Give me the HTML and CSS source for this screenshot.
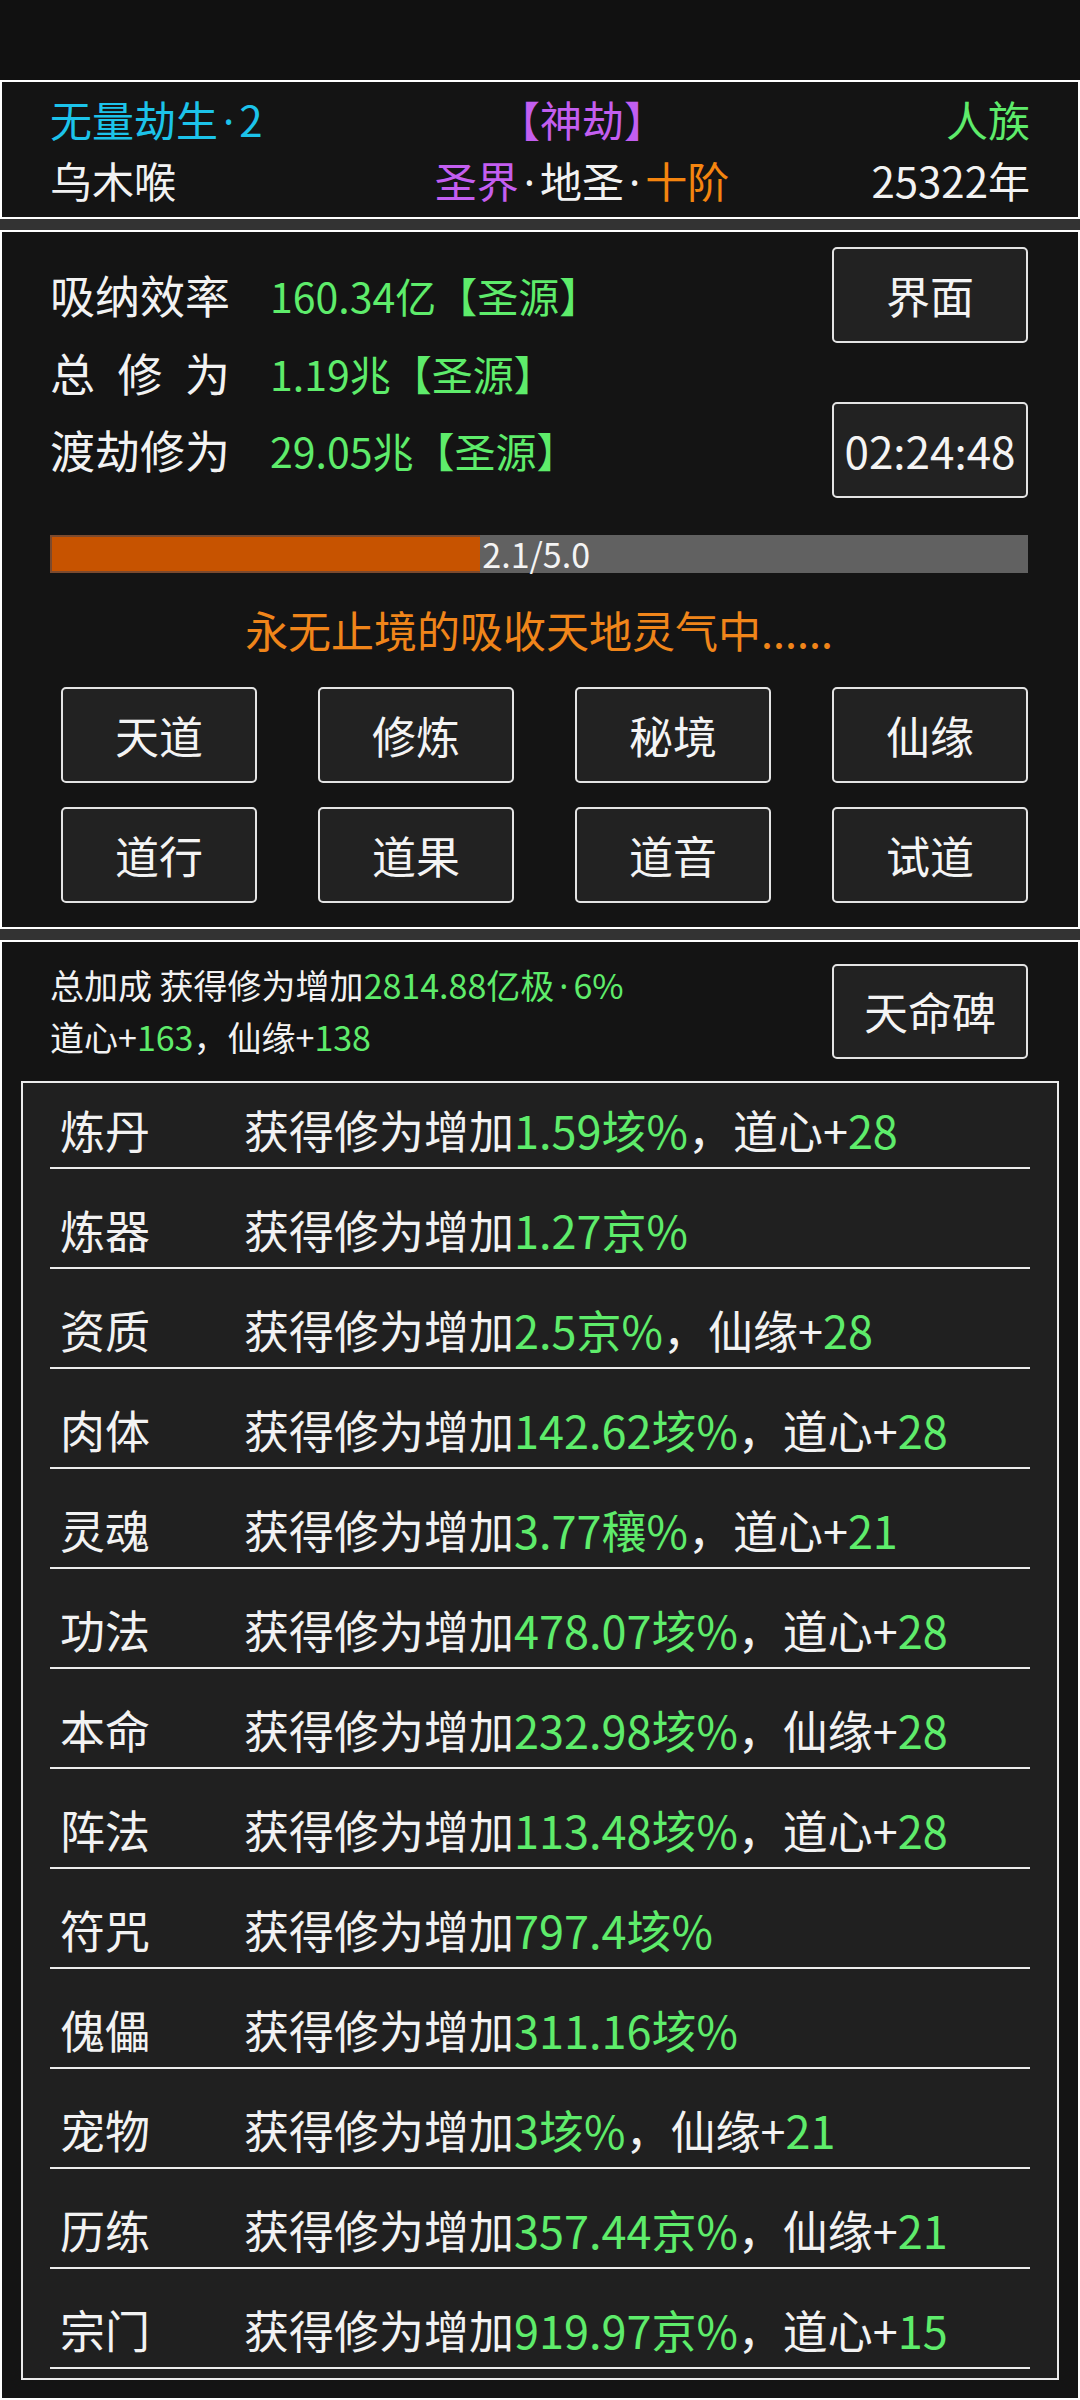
FILE: index.html
```html
<!DOCTYPE html>
<html lang="zh-CN">
<head>
<meta charset="utf-8">
<title>修仙</title>
<link rel="stylesheet" href="styles.css">
</head>
<body>
<div class="statusbar"></div>

<section class="panel header">
  <div class="hrow">
    <span class="cyan">无量劫生<span class="dot">·</span>2</span>
    <span class="mid purple">【神劫】</span>
    <span class="right green">人族</span>
  </div>
  <div class="hrow">
    <span>乌木喉</span>
    <span class="mid"><span class="purple">圣界</span><span class="dot">·</span>地圣<span class="dot">·</span><span class="orange">十阶</span></span>
    <span class="right">25322年</span>
  </div>
</section>

<div class="band"></div>

<section class="panel main">
  <div class="stats">
    <div class="label">吸纳效率</div>
    <div class="value">160.34亿【圣源】</div>
    <button class="btn side-btn">界面</button>
    <div class="label">总 修 为</div>
    <div class="value">1.19兆【圣源】</div>
    <div class="label">渡劫修为</div>
    <div class="value">29.05兆【圣源】</div>
    <button class="btn side-btn">02:24:48</button>
  </div>

  <div class="bar">
    <div class="fill" style="width:44%"></div>
    <span class="bar-text">2.1/5.0</span>
  </div>

  <p class="status">永无止境的吸收天地灵气中......</p>

  <div class="menu">
    <button class="btn">天道</button>
    <button class="btn">修炼</button>
    <button class="btn">秘境</button>
    <button class="btn">仙缘</button>
    <button class="btn">道行</button>
    <button class="btn">道果</button>
    <button class="btn">道音</button>
    <button class="btn">试道</button>
  </div>
</section>

<div class="band"></div>

<section class="panel bottom">
  <div class="summary">
    <div class="sum-text">
      <div>总加成 获得修为增加<span class="green">2814.88亿极<span class="dot">·</span>6%</span></div>
      <div>道心+<span class="green">163</span>，仙缘+<span class="green">138</span></div>
    </div>
    <button class="btn side-btn">天命碑</button>
  </div>

  <div class="list">
    <div class="row"><span class="name">炼丹</span><span class="desc">获得修为增加<span class="green">1.59垓%</span>，道心+<span class="green">28</span></span></div>
    <div class="row"><span class="name">炼器</span><span class="desc">获得修为增加<span class="green">1.27京%</span></span></div>
    <div class="row"><span class="name">资质</span><span class="desc">获得修为增加<span class="green">2.5京%</span>，仙缘+<span class="green">28</span></span></div>
    <div class="row"><span class="name">肉体</span><span class="desc">获得修为增加<span class="green">142.62垓%</span>，道心+<span class="green">28</span></span></div>
    <div class="row"><span class="name">灵魂</span><span class="desc">获得修为增加<span class="green">3.77穰%</span>，道心+<span class="green">21</span></span></div>
    <div class="row"><span class="name">功法</span><span class="desc">获得修为增加<span class="green">478.07垓%</span>，道心+<span class="green">28</span></span></div>
    <div class="row"><span class="name">本命</span><span class="desc">获得修为增加<span class="green">232.98垓%</span>，仙缘+<span class="green">28</span></span></div>
    <div class="row"><span class="name">阵法</span><span class="desc">获得修为增加<span class="green">113.48垓%</span>，道心+<span class="green">28</span></span></div>
    <div class="row"><span class="name">符咒</span><span class="desc">获得修为增加<span class="green">797.4垓%</span></span></div>
    <div class="row"><span class="name">傀儡</span><span class="desc">获得修为增加<span class="green">311.16垓%</span></span></div>
    <div class="row"><span class="name">宠物</span><span class="desc">获得修为增加<span class="green">3垓%</span>，仙缘+<span class="green">21</span></span></div>
    <div class="row"><span class="name">历练</span><span class="desc">获得修为增加<span class="green">357.44京%</span>，仙缘+<span class="green">21</span></span></div>
    <div class="row"><span class="name">宗门</span><span class="desc">获得修为增加<span class="green">919.97京%</span>，道心+<span class="green">15</span></span></div>
  </div>
</section>
</body>
</html>
```

FILE: styles.css
```css
* {
  box-sizing: border-box;
}

html,
body {
  margin: 0;
  padding: 0;
}

body {
  width: 1080px;
  height: 2400px;
  overflow: hidden;
  background: #333333;
  color: #f2f2f2;
  font-family: "Noto Sans CJK SC", "Noto Sans", sans-serif;
}

.cyan { color: #1cc3ea; }
.purple { color: #c35ef0; }
.green { color: #5eec6b; }
.orange { color: #f5850f; }

.dot {
  font-family: "Noto Sans", "Liberation Sans", sans-serif;
  line-height: 1;
  padding: 0 5px;
}

.statusbar {
  height: 80px;
  background: #111111;
}

.band {
  height: 11px;
}

.panel {
  background: #141414;
  border: 2px solid #ffffff;
}

/* header */
.header {
  padding: 7px 48px;
  display: flex;
  flex-direction: column;
  gap: 1px;
}

.hrow {
  display: grid;
  grid-template-columns: 382px 300px 1fr;
  height: 60px;
  font-size: 42px;
  line-height: 60px;
  white-space: nowrap;
}

.hrow .mid {
  text-align: center;
}

.hrow .right {
  text-align: right;
}

/* main panel */
.main {
  padding: 15px 50px 24px 48px;
}

.stats {
  display: grid;
  grid-template-columns: 180px 1fr 196px;
  grid-template-rows: 96px 59px 96px;
  column-gap: 40px;
  align-items: center;
}

.label {
  grid-column: 1;
  font-size: 45px;
  line-height: 60px;
  text-align: justify;
  text-align-last: justify;
  white-space: nowrap;
}

.value {
  grid-column: 2;
  font-size: 41px;
  line-height: 60px;
  color: #5eec6b;
  white-space: nowrap;
}

.side-btn {
  grid-column: 3;
  height: 96px;
  width: 196px;
}

.btn {
  font: inherit;
  font-size: 44px;
  color: #f4f4f4;
  background: #222222;
  border: 2px solid #e4e4e4;
  border-radius: 5px;
  padding: 0;
  height: 96px;
  white-space: nowrap;
}

.bar {
  margin-top: 37px;
  height: 38px;
  background: #616161;
  display: flex;
  align-items: center;
}

.fill {
  height: 100%;
  background: #c75300;
  border: 2px solid #7c4a2e;
  border-right: none;
}

.bar-text {
  font-size: 34px;
  line-height: 38px;
  color: #f4f4f4;
  padding-left: 2px;
}

.status {
  margin: 26px 0 0;
  font-size: 43px;
  line-height: 60px;
  text-align: center;
  color: #f0851a;
}

.menu {
  margin-top: 28px;
  display: grid;
  grid-template-columns: repeat(4, 196px);
  justify-content: end;
  column-gap: 61px;
  row-gap: 24px;
}

/* bottom panel */
.bottom {
  padding: 17px 0 18px;
}

.summary {
  display: flex;
  align-items: center;
  justify-content: space-between;
  padding: 0 50px 0 48px;
}

.sum-text {
  font-size: 34px;
  line-height: 52px;
  white-space: nowrap;
}

.sum-text > div {
  height: 52px;
}

.summary .side-btn {
  height: 95px;
}

.list {
  margin: 18px 19px 0;
  border: 2px solid #ececec;
  background: #202020;
  padding: 0 27px 9px;
}

.row {
  display: flex;
  border-bottom: 2px solid #ececec;
  padding: 31px 0 7px 10px;
  font-size: 45px;
  line-height: 60px;
  white-space: nowrap;
}

.row:first-child {
  padding-top: 17px;
}

.name {
  width: 184px;
  flex: none;
}
```
